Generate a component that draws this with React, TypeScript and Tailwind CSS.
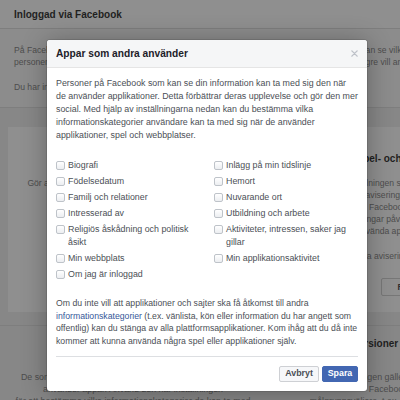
import type { ReactNode } from 'react'

const LEFT_ITEMS = [
  'Biografi',
  'Födelsedatum',
  'Familj och relationer',
  'Intresserad av',
  'Religiös åskådning och politisk åsikt',
  'Min webbplats',
  'Om jag är inloggad',
]

const RIGHT_ITEMS = [
  'Inlägg på min tidslinje',
  'Hemort',
  'Nuvarande ort',
  'Utbildning och arbete',
  'Aktiviteter, intressen, saker jag gillar',
  'Min applikationsaktivitet',
]

export default function App() {
  return (
    <div className="relative h-[400px] w-[400px] overflow-hidden bg-[#878787] font-['Liberation_Sans',Arial,sans-serif]">
      <SettingsPage />
      <AppsOthersUseDialog />
    </div>
  )
}

function SettingsPage() {
  return (
    <div className="w-[600px]">
      <header className="flex h-[29px] items-center border-b border-[#7e7e7e] bg-[#8f8f8f] pl-[14px] text-[10px] font-bold text-[#1f1f1f]">
        Inloggad via Facebook
      </header>
      <section className="border-b border-[#7e7e7e] bg-[#8c8c8c] px-[14px] pb-[14px] pt-[15px] text-[8.6px] leading-[12px] text-[#4d4d4d]">
        <p>
          På Facebook kan du använda ditt konto för att logga in på appar, spel och webbplatser. Du kan se vilka som finns här och ange
          <br />
          personer som ska kunna se att du använder dem. Du kan även ta bort appar som du inte längre vill använda eller som du valt
        </p>
        <p className="mt-[13px]">
          Du har inte använt Facebook för att logga in på några appar, webbplatser eller spel.
        </p>
      </section>

      <div className="grid grid-cols-[266px_300px]">
        <SettingsCard title="Appar och webbplatser" button="Redigera" buttonPad="px-[10px]">
          Gör att du kan använda appar, spel och webbplatser på
          <br />
          Facebook.
        </SettingsCard>
        <SettingsCard title="Spel- och appaviseringar" button="Redigera" buttonPad="px-[16px]">
          Den här inställningen styr spelförfrågningar från appar
          <br />
          och aviseringar i appar och spel på
          <br />
          Facebook. Den påverkar
          <br />
          Appaviseringar påverkar inte de som du får när
          <br />
          när du använda appar och spel på Facebook.
          <span className="mt-[13px] block">Ändra dina aviseringar för spel och appar här</span>
        </SettingsCard>
        <LowerSection title="Appar som andra använder">
          De som kan se din information kan ta med sig den när de
          <br />
          använder appar. Använd den här inställningen
          <br />
          för att bestämma vilka informationskategorier de kan ta med
        </LowerSection>
        <LowerSection title="Äldre versioner av Facebook för mobil">
          Den här inställningen gäller äldre versioner av Facebook för
          <br />
          Facebook för mobil som
          <br />
          målgruppsväljare, t.ex. gamla versioner för BlackBerry
        </LowerSection>
      </div>
    </div>
  )
}

function SettingsCard({
  title,
  button,
  buttonPad,
  children,
}: {
  title: string
  button: string
  buttonPad: string
  children: ReactNode
}) {
  return (
    <div className="h-[218px] border-b border-[#7e7e7e] px-[8px] pt-[19px]">
      <div className="flex h-[185px] flex-col items-center bg-[#8f8f8f] pt-[25px] text-center">
        <h3 className="text-[10px] font-bold leading-[13px] text-[#1f1f1f]">{title}</h3>
        <p className="mt-[12px] whitespace-nowrap text-[8.6px] leading-[12px] text-[#4d4d4d]">{children}</p>
        <button
          className={`mt-auto mb-[16px] h-[18px] rounded-[2px] border border-[#777] bg-[#8f8f8f] text-[8.6px] font-bold text-[#2e2e2e] ${buttonPad}`}
        >
          {button}
        </button>
      </div>
    </div>
  )
}

function LowerSection({ title, children }: { title: string; children: ReactNode }) {
  return (
    <div className="flex flex-col items-center px-[6px] pt-[11px] text-center">
      <h3 className="text-[10px] font-bold leading-[13px] text-[#1f1f1f]">{title}</h3>
      <p className="mt-[21px] whitespace-nowrap text-[8.85px] leading-[12px] text-[#4d4d4d]">{children}</p>
    </div>
  )
}

function AppsOthersUseDialog() {
  const rows: [string, string | undefined][] = LEFT_ITEMS.map((label, i) => [label, RIGHT_ITEMS[i]])

  return (
    <div className="absolute left-[47px] top-[40px] w-[320px] rounded-[3px] bg-white shadow-[0_2px_26px_rgba(0,0,0,0.3),0_0_0_1px_rgba(0,0,0,0.1)]">
      <div className="flex h-[28px] items-center justify-between rounded-t-[3px] border-b border-[#e5e5e5] bg-[#f5f6f7] pl-[9px] pr-[9px]">
        <h2 className="text-[10.2px] font-bold text-[#1d2129]">Appar som andra använder</h2>
        <svg viewBox="0 0 8 8" className="h-[7px] w-[7px]" aria-label="Stäng">
          <path d="M1 1L7 7M7 1L1 7" stroke="#bec2c9" strokeWidth="1.6" strokeLinecap="round" />
        </svg>
      </div>

      <div className="px-[9px] pt-[9px] text-[8.85px] leading-[13px] text-[#4b4f56]">
        <p>
          Personer på Facebook som kan se din information kan ta med sig den när de använder applikationer. Detta förbättrar deras upplevelse och gör den mer social. Med hjälp av inställningarna nedan kan du bestämma vilka informationskategorier användare kan ta med sig när de använder applikationer, spel och webbplatser.
        </p>

        <div className="mt-[17px] grid grid-cols-[158px_1fr] gap-y-[3px]">
          {rows.map(([left, right]) => (
            <div key={left} className="contents">
              <CheckItem label={left} className="pr-[12px]" />
              {right ? <CheckItem label={right} /> : <div />}
            </div>
          ))}
        </div>

        <p className="mt-[16px] text-[8.7px] leading-[12.7px]">
          Om du inte vill att applikationer och sajter ska få åtkomst till andra{' '}
          <a className="text-[#365899]">informationskategorier</a> (t.ex. vänlista, kön eller information du har angett som offentlig) kan du stänga av alla plattformsapplikationer. Kom ihåg att du då inte kommer att kunna använda några spel eller applikationer själv.
        </p>

        <div className="mt-[8px] flex justify-end gap-[3px] border-t border-[#dddfe2] pb-[9px] pt-[9px]">
          <button className="h-[16px] w-[40px] rounded-[2px] border border-[#ced0d4] bg-[#f6f7f9] text-[8.85px] font-bold text-[#4b4f56]">
            Avbryt
          </button>
          <button className="h-[16px] w-[36px] rounded-[2px] border border-[#4267b2] bg-[#4267b2] text-[8.85px] font-bold text-white">
            Spara
          </button>
        </div>
      </div>
    </div>
  )
}

function CheckItem({ label, className = '' }: { label: string; className?: string }) {
  return (
    <label className={`flex items-start gap-[3px] ${className}`}>
      <span className="mt-[2px] h-[9px] w-[9px] shrink-0 rounded-[2px] border border-[#bec3c9] bg-gradient-to-b from-white to-[#eceef1]" />
      <span>{label}</span>
    </label>
  )
}
